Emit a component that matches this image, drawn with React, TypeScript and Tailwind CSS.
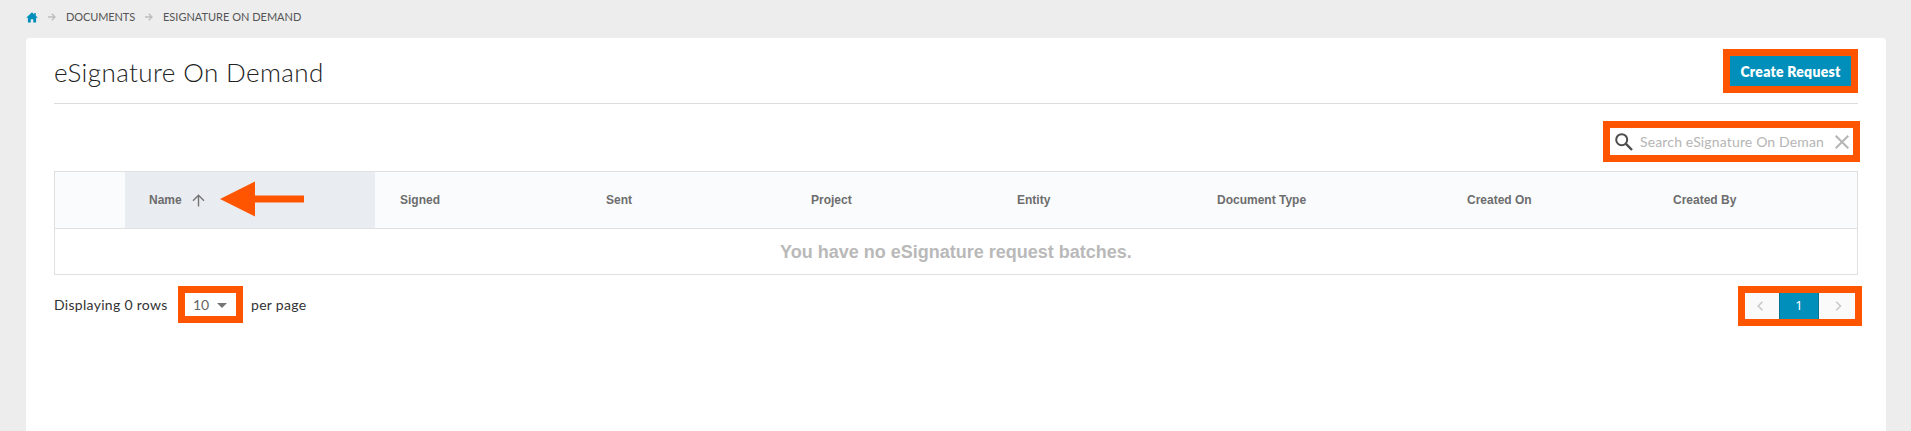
import type { ReactNode } from 'react';

const columns = [
  { label: 'Signed', width: 'w-[206px]' },
  { label: 'Sent', width: 'w-[205px]' },
  { label: 'Project', width: 'w-[206px]' },
  { label: 'Entity', width: 'w-[200px]' },
  { label: 'Document Type', width: 'w-[250px]' },
  { label: 'Created On', width: 'w-[206px]' },
  { label: 'Created By', width: 'flex-1' },
];

function Highlight({ className, children }: { className: string; children: ReactNode }) {
  return <div className={`flex shrink-0 border-[7px] border-[#ff5500] ${className}`}>{children}</div>;
}

function CrumbArrow({ className }: { className: string }) {
  return (
    <svg className={`shrink-0 ${className}`} width="8" height="8" viewBox="0 0 8 8" fill="none" stroke="#bdbdbd" strokeWidth="1.3">
      <path d="M0 4h7M3.8 0.8L7 4L3.8 7.2" />
    </svg>
  );
}

function Breadcrumbs() {
  return (
    <nav className="flex h-[38px] items-start pl-[26px] pt-[9px] text-[11px] leading-4 text-[#555]">
      <svg className="mt-[3px] shrink-0" width="12" height="11" viewBox="0 0 12 11" fill="#008fbb">
        <path d="M6 0.3L0.2 5.7H1.9V10.5H4.8V7.2H7.2V10.5H10.1V5.7H11.8L9.8 3.8V1H8.3V2.4Z" />
      </svg>
      <CrumbArrow className="ml-[10px] mt-1" />
      <a href="#" className="ml-[10px] w-[69px] whitespace-nowrap tracking-[-0.1px]">DOCUMENTS</a>
      <CrumbArrow className="ml-[10px] mt-1" />
      <span className="ml-[10px] whitespace-nowrap">ESIGNATURE ON DEMAND</span>
    </nav>
  );
}

function BatchTable() {
  return (
    <div className="mt-[9px] h-[104px] border border-[#dee0e2]">
      <div className="flex h-[57px] items-stretch border-b border-[#dee0e2] bg-[#fafbfd] text-xs font-bold text-[#6d6d6d]">
        <div className="w-[70px]" />
        <div className="flex w-[250px] items-center bg-[#e9ecf1] pl-6">
          <span>Name</span>
          <svg className="ml-[10px] mt-px" width="13" height="13" viewBox="0 0 13 13" fill="none" stroke="#757575" strokeWidth="1.4">
            <path d="M6.5 12.5V1.2M1 6.7L6.5 1.2L12 6.7" />
          </svg>
          <svg className="-mt-[2px] ml-[15px]" width="85" height="36" viewBox="0 0 85 36" fill="#ff5500">
            <path d="M0 18L35 0.5V14.5H84V21.5H35V35.5Z" />
          </svg>
        </div>
        {columns.map((column) => (
          <div key={column.label} className={`flex items-center pl-[25px] ${column.width}`}>
            {column.label}
          </div>
        ))}
      </div>
      <div className="flex h-[45px] items-center justify-center text-lg font-bold text-[#b9b9b9]">
        You have no eSignature request batches.
      </div>
    </div>
  );
}

function Pager() {
  return (
    <Highlight className="-mr-1 h-10 w-[124px]">
      <button className="flex w-[34px] items-center justify-center bg-[#fafafa]">
        <svg className="-ml-1" width="7" height="10" viewBox="0 0 7 10" fill="none" stroke="#c9c9c9" strokeWidth="1.6">
          <path d="M5.5 0.7L1.2 5L5.5 9.3" />
        </svg>
      </button>
      <button className="flex w-10 items-center justify-center border-x border-[#087395] bg-[#008fbb] pb-0.5 text-[13px] text-white font-['Noto_Sans',sans-serif]">
        1
      </button>
      <button className="flex flex-1 items-center justify-center bg-[#fafafa]">
        <svg className="ml-0.5" width="7" height="10" viewBox="0 0 7 10" fill="none" stroke="#c9c9c9" strokeWidth="1.6">
          <path d="M1.2 0.7L5.5 5L1.2 9.3" />
        </svg>
      </button>
    </Highlight>
  );
}

export default function App() {
  return (
    <div className="h-[431px] w-[1911px] overflow-hidden bg-[#ededed] font-[Lato,'Open_Sans',sans-serif]">
      <Breadcrumbs />
      <main className="ml-[26px] flex h-[393px] w-[1860px] flex-col rounded-t-sm bg-white px-7">
        <header className="flex h-[66px] items-start justify-between border-b border-[#dcdcdc]">
          <h1 className="mt-4 whitespace-nowrap text-[26px] font-light leading-9 tracking-[0.4px] text-[#222]">eSignature On Demand</h1>
          <Highlight className="mt-[11px] h-[44px] w-[135px]">
            <button className="flex-1 whitespace-nowrap bg-[#008fbb] pt-0.5 text-sm font-extrabold tracking-[0.25px] text-white">Create Request</button>
          </Highlight>
        </header>

        <div className="-mr-0.5 mt-[17px] flex justify-end">
          <Highlight className="h-[41px] w-[257px] items-center">
            <svg className="ml-[5px] shrink-0" width="18" height="18" viewBox="0 0 18 18" fill="none" stroke="#4d4d4d" strokeWidth="2">
              <circle cx="6.7" cy="6.7" r="5.5" />
              <path d="M10.7 10.7L17 17" strokeWidth="2.4" />
            </svg>
            <input
              className="ml-[7px] w-[188px] text-sm tracking-[0.15px] outline-none placeholder:text-[#b5b5b5]"
              placeholder="Search eSignature On Deman"
            />
            <svg className="ml-[7px] shrink-0" width="14" height="14" viewBox="0 0 14 14" fill="none" stroke="#b5b5b5" strokeWidth="2">
              <path d="M0.7 0.7L13.3 13.3M13.3 0.7L0.7 13.3" />
            </svg>
          </Highlight>
        </div>

        <div className="font-['Liberation_Sans',Arial,sans-serif]">
          <BatchTable />
        </div>

        <footer className="mt-[11px] flex items-start justify-between text-sm text-[#333]">
          <div className="flex h-[37px] items-center">
            <span className="w-[124px] whitespace-nowrap tracking-[0.3px]">Displaying 0 rows</span>
            <Highlight className="h-[37px] w-[65px] items-center">
              <span className="ml-2 w-6 text-[#666]">10</span>
              <svg className="mt-0.5" width="10" height="5" viewBox="0 0 10 5" fill="#757575">
                <path d="M0 0H10L5 5Z" />
              </svg>
            </Highlight>
            <span className="ml-2 whitespace-nowrap tracking-[0.3px]">per page</span>
          </div>
          <Pager />
        </footer>
      </main>
    </div>
  );
}
